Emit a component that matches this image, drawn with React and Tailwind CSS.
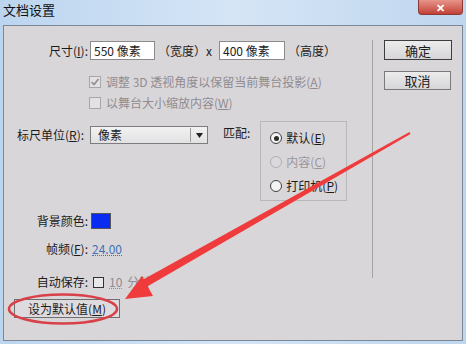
import React from 'react';

const FONT = { fontFamily: '"Noto Sans CJK SC", "Noto Sans", sans-serif' };

const Label = ({ children, className = '' }) => (
    <div className={`w-[85px] shrink-0 text-right pr-[1px] ${className}`}>{children}</div>
);

const Radio = ({ checked, disabled, children }) => (
    <div className={`flex items-center h-[24px] ${disabled ? 'text-[#9a979b]' : 'text-[#1c1c1c]'}`}>
        <span
            className={`w-[12px] h-[12px] rounded-full border flex items-center justify-center ${
                disabled ? 'border-[#b2afb3] bg-[#dcd9dd]' : 'border-[#3e3e3e] bg-[#f4f4f4]'
            }`}
        >
            {checked && <span className="w-[5px] h-[5px] rounded-full bg-[#2a2a2a]" />}
        </span>
        <span className="ml-[4px]">{children}</span>
    </div>
);

const App = () => {
    return (
        <div
            className="relative w-[466px] h-[344px] overflow-hidden bg-gradient-to-r from-[#bcd5ef] via-[#d5e5f6] to-[#bfd6ee] flex flex-col text-[12px] leading-none text-[#1c1c1c]"
            style={FONT}
        >
            {/* title bar */}
            <div className="h-[25px] shrink-0 flex items-start justify-between">
                <div className="pl-[3px] pt-[3px] text-[13px] text-[#111]">文档设置</div>
                <div className="mr-[3px] w-[45px] h-[15px] rounded-b-[4px] border border-t-0 border-[#8c3b35] bg-gradient-to-b from-[#e6948a] to-[#c23f36] flex items-center justify-center text-white text-[11px] font-bold">
                    ✕
                </div>
            </div>

            {/* body */}
            <div className="mx-[3px] mb-[3px] flex-1 border border-[#7b8898] bg-[#d9d6da] flex">
                {/* left */}
                <div className="w-[368px] shrink-0 flex flex-col">
                    {/* size row */}
                    <div className="mt-[15px] h-[19px] flex items-center">
                        <Label>尺寸(<u>I</u>):</Label>
                        <div className="ml-[1px] w-[65px] h-[19px] border border-[#8b8b8b] bg-white flex items-center pl-[3px]">550 像素</div>
                        <div className="ml-[3px]">（宽度）x</div>
                        <div className="ml-[7px] w-[66px] h-[19px] border border-[#8b8b8b] bg-white flex items-center pl-[3px]">400 像素</div>
                        <div className="ml-[3px]">（高度）</div>
                    </div>

                    {/* checkboxes */}
                    <div className="mt-[15px] h-[13px] flex items-center text-[#8f8c90]">
                        <span className="ml-[85px] w-[12px] h-[12px] border border-[#a9a6aa] bg-[#e3e1e4] flex items-center justify-center">
                            <svg width="10" height="10" viewBox="0 0 10 10">
                                <path d="M1.5 5 L4 7.5 L8.5 2" fill="none" stroke="#8f8c90" strokeWidth="1.6" />
                            </svg>
                        </span>
                        <span className="ml-[5px]">调整 3D 透视角度以保留当前舞台投影(<u>A</u>)</span>
                    </div>
                    <div className="mt-[8px] h-[13px] flex items-center text-[#8f8c90]">
                        <span className="ml-[85px] w-[12px] h-[12px] border border-[#a9a6aa] bg-[#e3e1e4]" />
                        <span className="ml-[5px]">以舞台大小缩放内容(<u>W</u>)</span>
                    </div>

                    {/* ruler + match */}
                    <div className="mt-[14px] flex items-start">
                        <div className="mt-[3px] h-[18px] flex items-center">
                            <div className="pl-[13px] w-[85px] shrink-0">标尺单位(<u>R</u>):</div>
                            <div className="ml-[1px] w-[118px] h-[18px] border border-[#7d7d7d] bg-gradient-to-b from-[#f2f2f2] to-[#e2e1e3] flex items-center">
                                <span className="flex-1 pl-[7px]">像素</span>
                                <span className="w-[17px] h-[14px] border-l border-[#9a9a9a] flex items-center justify-center">
                                    <svg width="7" height="5" viewBox="0 0 7 5">
                                        <path d="M0 0 H7 L3.5 5 Z" fill="#222" />
                                    </svg>
                                </span>
                            </div>
                        </div>
                        <div className="ml-[15px] mt-[4px]">匹配:</div>
                        <div className="ml-[10px] mt-[-2px] w-[87px] h-[80px] border border-[#b9b6ba] flex flex-col pl-[9px] pt-[4px]">
                            <Radio checked>默认(<u>E</u>)</Radio>
                            <Radio disabled>内容(<u>C</u>)</Radio>
                            <Radio>打印机(<u>P</u>)</Radio>
                        </div>
                    </div>

                    {/* background colour */}
                    <div className="mt-[12px] h-[16px] flex items-center">
                        <Label>背景颜色:</Label>
                        <div className="ml-[2px] w-[20px] h-[16px] border border-[#555] bg-[#0a2cf0]" />
                    </div>

                    {/* frame rate */}
                    <div className="mt-[13px] h-[14px] flex items-center">
                        <Label>帧频(<u>F</u>):</Label>
                        <span className="ml-[3px] text-[#3f72b3] border-b border-dotted border-[#3f72b3]">24.00</span>
                    </div>

                    {/* autosave */}
                    <div className="mt-[19px] h-[14px] flex items-center">
                        <Label>自动保存:</Label>
                        <span className="ml-[4px] w-[11px] h-[11px] border border-[#333] bg-[#e8e7e9]" />
                        <span className="ml-[5px] text-[#8f8c90] border-b border-dotted border-[#8f8c90]">10</span>
                        <span className="ml-[5px] text-[#8f8c90]">分钟</span>
                    </div>

                    {/* default */}
                    <div className="mt-[10px] ml-[10px] w-[106px] h-[19px] border border-[#6f6f6f] bg-[#dedbdf] flex items-center justify-center">
                        设为默认值(<u>M</u>)
                    </div>
                </div>

                {/* separator */}
                <div className="mt-[14px] w-[1px] h-[238px] bg-[#a6a3a7]" />

                {/* buttons */}
                <div className="ml-[11px] mt-[14px] flex flex-col gap-[11px]">
                    <div className="w-[68px] h-[20px] border border-[#3d3d3d] bg-gradient-to-b from-[#ececec] to-[#d6d5d8] flex items-center justify-center text-[13px]">
                        确定
                    </div>
                    <div className="w-[67px] h-[19px] border border-[#7a7a7a] bg-gradient-to-b from-[#ececec] to-[#d6d5d8] flex items-center justify-center text-[13px]">
                        取消
                    </div>
                </div>
            </div>

            {/* annotation overlay */}
            <svg className="absolute inset-0 pointer-events-none" width="466" height="344" viewBox="0 0 466 344">
                <ellipse cx="63" cy="309" rx="54" ry="14.5" fill="none" stroke="#d8414a" strokeWidth="2.5" />
                <polygon
                    points="410.5,133.9 409.5,132.1 140.5,281 145.5,287.5"
                    fill="#ef3b3b"
                />
                <polygon points="125,299 142,276 153,296" fill="#ef3b3b" />
            </svg>
        </div>
    );
};

export default App;
